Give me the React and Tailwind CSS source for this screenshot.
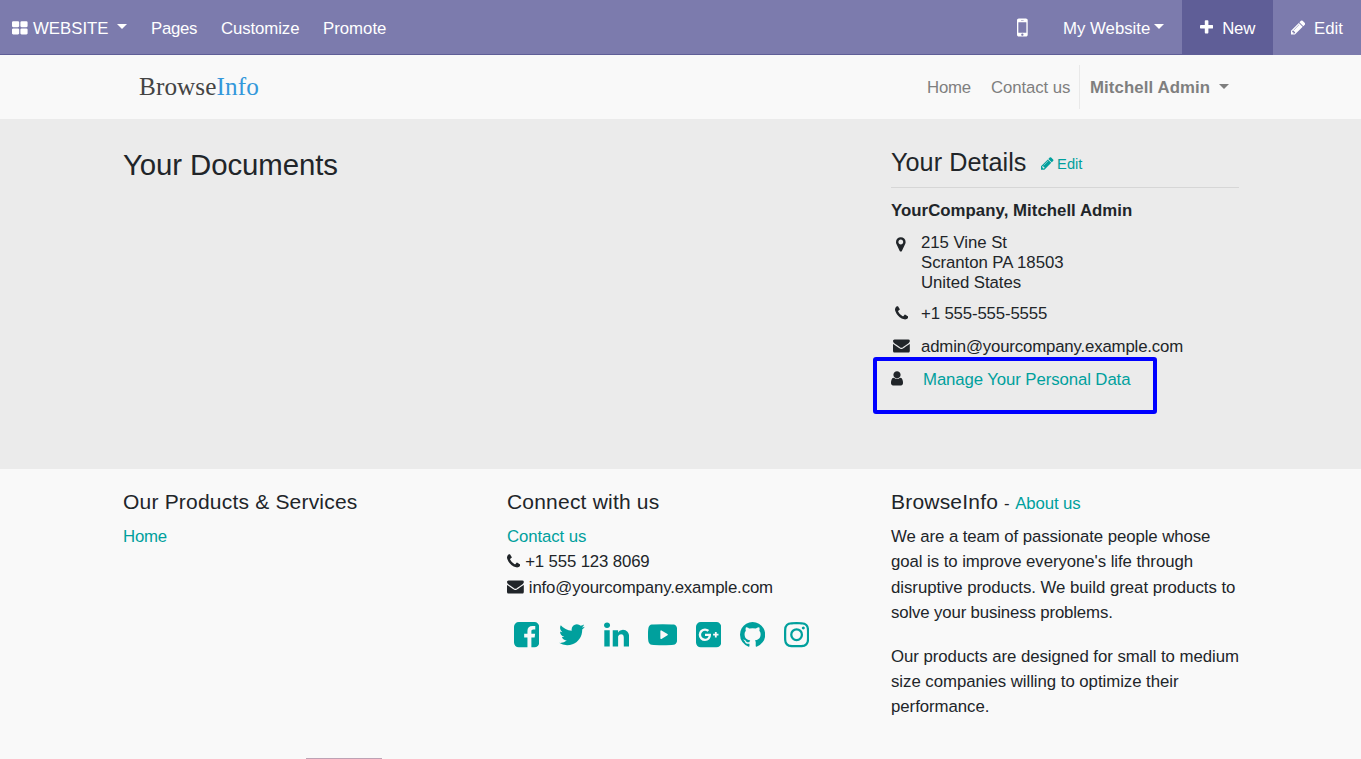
import React from "react";

const icons = {
  grid: [64, 1664, "M832 1024v384q0 52-38 90t-90 38h-512q-52 0-90-38t-38-90v-384q0-52 38-90t90-38h512q52 0 90 38t38 90zm0-768v384q0 52-38 90t-90 38h-512q-52 0-90-38t-38-90v-384q0-52 38-90t90-38h512q52 0 90 38t38 90zm896 768v384q0 52-38 90t-90 38h-512q-52 0-90-38t-38-90v-384q0-52 38-90t90-38h512q52 0 90 38t38 90zm0-768v384q0 52-38 90t-90 38h-512q-52 0-90-38t-38-90v-384q0-52 38-90t90-38h512q52 0 90 38t38 90z"],
  phone: [192, 1408, "M1600 1240q0 27-10 70.5t-21 68.5q-21 50-122 106-94 51-186 51-27 0-53-3.5t-57.5-12.5-47-14.5-55.5-20.5-49-18q-98-35-175-83-127-79-264-216t-216-264q-48-77-83-175-3-9-18-49t-20.5-55.5-14.5-47-12.5-57.5-3.5-53q0-92 51-186 56-101 106-122 25-11 68.5-21t70.5-10q14 0 21 3 18 6 53 76 11 19 30 54t35 63.5 31 53.5q3 4 17.5 25t21.5 35.5 7 28.5q0 20-28.5 50t-62 55-62 53-28.5 46q0 9 5 22.5t8.5 20.5 14 24 11.5 19q76 137 174 235t235 174q2 1 19 11.5t24 14 20.5 8.5 22.5 5q18 0 46-28.5t53-62 55-62 50-28.5q14 0 28.5 7t35.5 21.5 25 17.5q25 15 53.5 31t63.5 35 54 30q70 35 76 53 3 7 3 21z"],
  envelope: [0, 1792, "M1792 710v794q0 66-47 113t-113 47h-1472q-66 0-113-47t-47-113v-794q44 49 101 87 362 246 497 345 57 42 92.5 65.5t94.5 48 110 24.5h2q51 0 110-24.5t94.5-48 92.5-65.5q170-123 498-345 57-39 100-87zm0-294q0 79-49 151t-122 123q-376 261-468 325-10 7-42.5 31t-54 38.5-52 32.5-57.5 27-50 9h-2q-23 0-50-9t-57.5-27-52-32.5-54-38.5-42.5-31q-91-64-262-182.5t-205-142.5q-62-42-117-115.5t-55-136.5q0-78 41.5-130t118.5-52h1472q65 0 112.5 47t47.5 113z"],
  pencil: [128, 1536, "M491 1536l91-91-235-235-91 91v107h128v128h107zm523-928q0-22-22-22-10 0-17 7l-542 542q-7 7-7 17 0 22 22 22 10 0 17-7l542-542q7-7 7-17zm-54-192l416 416-832 832h-416v-416zm683 96q0 53-37 90l-166 166-416-416 166-165q36-38 90-38 53 0 91 38l235 234q37 39 37 91z"],
  plus: [192, 1408, "M1600 736v192q0 40-28 68t-68 28h-416v416q0 40-28 68t-68 28h-192q-40 0-68-28t-28-68v-416h-416q-40 0-68-28t-28-68v-192q0-40 28-68t68-28h416v-416q0-40 28-68t68-28h192q40 0 68 28t28 68v416h416q40 0 68 28t28 68z"],
  mobile: [512, 768, "M976 1408q0-33-23.5-56.5t-56.5-23.5-56.5 23.5-23.5 56.5 23.5 56.5 56.5 23.5 56.5-23.5 23.5-56.5zm208-160v-704q0-13-9.5-22.5t-22.5-9.5h-512q-13 0-22.5 9.5t-9.5 22.5v704q0 13 9.5 22.5t22.5 9.5h512q13 0 22.5-9.5t9.5-22.5zm-192-848q0-16-16-16h-160q-16 0-16 16t16 16h160q16 0 16-16zm288-16v1024q0 52-38 90t-90 38h-512q-52 0-90-38t-38-90v-1024q0-52 38-90t90-38h512q52 0 90 38t38 90z"],
  marker: [384, 1024, "M1152 640q0-106-75-181t-181-75-181 75-75 181 75 181 181 75 181-75 75-181zm256 0q0 109-33 179l-364 774q-16 33-47.5 52t-67.5 19-67.5-19-46.5-52l-365-774q-33-70-33-179 0-212 150-362t362-150 362 150 150 362z"],
  user: [256, 1280, "M1536 1399q0 109-62.5 187t-150.5 78h-854q-88 0-150.5-78t-62.5-187q0-85 8.5-160.5t31.5-152 58.5-131 94-89 134.5-34.5q131 128 313 128t313-128q76 0 134.5 34.5t94 89 58.5 131 31.5 152 8.5 160.5zm-256-887q0 159-112.5 271.5t-271.5 112.5-271.5-112.5-112.5-271.5 112.5-271.5 271.5-112.5 271.5 112.5 112.5 271.5z"],
  facebook: [128, 1536, "M1376 128q119 0 203.5 84.5t84.5 203.5v960q0 119-84.5 203.5t-203.5 84.5h-188v-595h199l30-232h-229v-148q0-56 23.5-84t91.5-28l122-1v-207q-63-9-178-9-136 0-217.5 80t-81.5 226v171h-200v232h200v595h-532q-119 0-203.5-84.5t-84.5-203.5v-960q0-119 84.5-203.5t203.5-84.5h960z"],
  twitter: [108, 1576, "M1684 408q-67 98-162 167 1 14 1 42 0 130-38 259.5t-115.5 248.5-184.5 210.5-258 146-323 54.5q-271 0-496-145 35 4 78 4 225 0 401-138-105-2-188-64.5t-114-159.5q33 5 61 5 43 0 85-11-112-23-185.5-111.5t-73.5-205.5v-4q68 38 146 41-66-44-105-115t-39-154q0-88 44-163 121 149 294.5 238.5t371.5 99.5q-8-38-8-74 0-134 94.5-228.5t228.5-94.5q140 0 236 102 109-21 205-78-37 115-142 178 93-10 186-50z"],
  linkedin: [128, 1536, "M477 625v991h-330v-991h330zm21-306q1 73-50.5 122t-135.5 49h-2q-82 0-132-49t-50-122q0-74 51.5-122.5t134.5-48.5 133 48.5 51 122.5zm1166 729v568h-329v-530q0-105-40.5-164.5t-126.5-59.5q-63 0-105.5 34.5t-63.5 85.5q-11 30-11 81v553h-329q2-399 2-647t-1-296l-1-48h329v144h-2q20-32 41-56t56.5-52 87-43.5 114.5-15.5q171 0 275 113.5t104 332.5z"],
  youtube: [0, 1792, "M1208 896q0-24-20-36l-368-224q-22-13-44-1-22 12-22 37v448q0 25 22 37 11 6 22 6 12 0 22-7l368-224q20-12 20-36zm584 0q0 96-1 150t-8.5 136.5-22.5 147.5q-16 73-69 123t-124 58q-222 25-671 25t-671-25q-71-8-124.5-58t-69.5-123q-14-65-21.5-147.5t-8.5-136.5-1-150 1-150 8.5-136.5 22.5-147.5q16-73 69-123t124-58q222-25 671-25t671 25q71 8 124.5 58t69.5 123q14 65 21.5 147.5t8.5 136.5 1 150z"],
  gplus: [128, 1536, "M1045 905q0-26-6-64h-362v132h217q-3 24-16.5 50t-37.5 53-66.5 44.5-96.5 17.5q-99 0-169-71t-70-171 70-171 169-71q92 0 153 59l104-101q-108-100-257-100-160 0-272 112.5t-112 271.5 112 271.5 272 112.5q165 0 266.5-105t101.5-270zm345 46h109v-110h-109v-110h-110v110h-110v110h110v110h110v-110zm274-535v960q0 119-84.5 203.5t-203.5 84.5h-960q-119 0-203.5-84.5t-84.5-203.5v-960q0-119 84.5-203.5t203.5-84.5h960q119 0 203.5 84.5t84.5 203.5z"],
  github: [128, 1536, "M896 128q209 0 385.5 103t279.5 279.5 103 385.5q0 251-146.5 451.5t-378.5 277.5q-27 5-40-7t-13-30q0-3 .5-76.5t.5-134.5q0-97-52-142 57-6 102.5-18t94-39 81-66.5 53-105 20.5-150.5q0-119-79-206 37-91-8-204-28-9-81 11t-92 44l-38 24q-93-26-192-26t-192 26q-16-11-42.5-27t-83.5-38.5-85-13.5q-45 113-8 204-79 87-79 206 0 85 20.5 150t52.5 105 80.5 67 94 39 102.5 18q-39 36-49 103-21 10-45 15t-57 5-65.5-21.5-55.5-62.5q-19-32-48.5-52t-49.5-24l-20-3q-21 0-29 4.5t-5 11.5 9 14 13 12l7 5q22 10 43.5 38t31.5 51l10 23q13 38 44 61.5t67 30 69.5 7 55.5-3.5l23-4q0 38 .5 88.5t.5 54.5q0 18-13 30t-40 7q-232-77-378.5-277.5t-146.5-451.5q0-209 103-385.5t279.5-279.5 385.5-103z"],
  instagram: [128, 1536, "M1152 896q0-106-75-181t-181-75-181 75-75 181 75 181 181 75 181-75 75-181zm138 0q0 164-115 279t-279 115-279-115-115-279 115-279 279-115 279 115 115 279zm108-410q0 38-27 65t-65 27-65-27-27-65 27-65 65-27 65 27 27 65zm-502-220q-7 0-76.5-.5t-105.5 0-96.5 3-103 10-71.5 18.5q-50 20-88 58t-58 88q-11 29-18.5 71.5t-10 103-3 96.5 0 105.5.5 76.5-.5 76.5 0 105.5 3 96.5 10 103 18.5 71.5q20 50 58 88t88 58q29 11 71.5 18.5t103 10 96.5 3 105.5 0 76.5-.5 76.5.5 105.5 0 96.5-3 103-10 71.5-18.5q50-20 88-58t58-88q11-29 18.5-71.5t10-103 3-96.5 0-105.5-.5-76.5.5-76.5 0-105.5-3-96.5-10-103-18.5-71.5q-20-50-58-88t-88-58q-29-11-71.5-18.5t-103-10-96.5-3-105.5 0-76.5.5zm768 630q0 229-5 317-10 208-124 322t-322 124q-88 5-317 5t-317-5q-208-10-322-124t-124-322q-5-88-5-317t5-317q10-208 124-322t322-124q88-5 317-5t317 5q208 10 322 124t124 322q5 88 5 317z"],
};

function Icon({ name, size = 16.8, className = "" }) {
  const [x, w, d] = icons[name];
  return (
    <svg className={`shrink-0 ${className}`} viewBox={`${x} 0 ${w} 1792`} width={(w / 1792) * size} height={size} fill="currentColor" aria-hidden="true">
      <path d={d} />
    </svg>
  );
}

function Caret({ className = "" }) {
  return (
    <svg className={`shrink-0 ${className}`} width="10" height="5" viewBox="0 0 10 5" fill="currentColor" aria-hidden="true">
      <path d="M0 0h10L5 5z" />
    </svg>
  );
}

function TopBar() {
  return (
    <nav className="flex h-[55px] border-b border-[#5f5e97] bg-[#7c7bad] leading-[57px] text-white">
      <div className="ml-3 flex w-[139px]">
        <Icon name="grid" className="mt-[19.7px]" />
        <span className="ml-[5.4px] w-[83.6px]">WEBSITE</span>
        <Caret className="mt-[24px]" />
      </div>
      <span className="w-[70px] tracking-[-0.3px]">Pages</span>
      <span className="w-[102px] tracking-[-0.1px]">Customize</span>
      <span>Promote</span>
      <Icon name="mobile" size={25} className="mt-[15px] ml-auto" />
      <div className="ml-[35.4px] flex w-[119px]">
        <span className="w-[91px]">My Website</span>
        <Caret className="mt-[24px]" />
      </div>
      <div className="flex h-[55px] w-[91px] bg-[#5f5e97] pl-[18px]">
        <Icon name="plus" className="mt-[19.4px]" />
        <span className="ml-[9px] tracking-[-0.2px]">New</span>
      </div>
      <div className="flex h-[55px] w-[88px] bg-[#7c7bad] pl-[18px]">
        <Icon name="pencil" className="mt-[19.2px]" />
        <span className="ml-[8.6px]">Edit</span>
      </div>
    </nav>
  );
}

function SiteHeader() {
  return (
    <header className="flex h-16 bg-[#f9f9f9] pl-[139px] leading-[66px] text-[#7f7f7f]">
      <div className="font-['Liberation_Serif',serif] text-[25.2px] leading-[63px] tracking-[0.1px] text-[#444]">
        Browse<span className="text-[#3498db]">Info</span>
      </div>
      <span className="ml-auto w-[64px] tracking-[-0.2px]">Home</span>
      <span className="w-[88px] tracking-[-0.1px]">Contact us</span>
      <div className="mt-[10px] flex h-11 w-[282px] border-l border-[#e9e9e9] pl-[10px] leading-[46px] font-bold">
        <span className="w-[129px] tracking-[0.1px]">Mitchell Admin</span>
        <Caret className="mt-[19px]" />
      </div>
    </header>
  );
}

function Documents() {
  return (
    <main className="flex h-[350px] bg-[#ebebeb] pl-[123px]">
      <h3 className="w-[768px] pt-[28px] text-[29.4px] leading-[35px] tracking-[-0.1px]">Your Documents</h3>
      <section className="relative w-[348px] pt-[27px]">
        <div className="flex h-[42px] border-b border-[#d6d6d6] leading-[32px]">
          <h4 className="w-[150px] text-[25.2px] tracking-[0.05px]">Your Details</h4>
          <a className="flex text-[14.7px] leading-[36px] text-[#00a09d]">
            <Icon name="pencil" size={14.7} className="mt-[10px]" />
            <span className="ml-[3.5px]">Edit</span>
          </a>
        </div>
        <div className="mt-[10px] leading-[25px] font-bold tracking-[0.04px]">YourCompany, Mitchell Admin</div>
        <div className="mt-[10px] flex leading-[20px]">
          <Icon name="marker" className="mt-[2.6px] ml-[5px]" />
          <address className="ml-[15.4px] tracking-[-0.05px] not-italic">
            215 Vine St<br />Scranton PA 18503<br />United States
          </address>
        </div>
        <div className="mt-[8px] flex h-[25px] leading-[25px]">
          <div className="w-[30px] pl-1"><Icon name="phone" className="mt-[3.8px]" /></div>
          <span className="tracking-[-0.14px]">+1 555-555-5555</span>
        </div>
        <div className="mt-[8px] flex h-[25px] leading-[25px]">
          <div className="w-[30px] pl-[2px]"><Icon name="envelope" className="mt-[3.3px]" /></div>
          <span className="tracking-[-0.16px]">admin@yourcompany.example.com</span>
        </div>
        <div className="mt-[8px] flex h-[25px] leading-[25px]">
          <div className="w-[32px]"><Icon name="user" className="mt-[3px]" /></div>
          <a className="tracking-[-0.1px] text-[#00a09d]">Manage Your Personal Data</a>
        </div>
        <div className="absolute top-[238px] left-[-18px] h-[57px] w-[284px] rounded-[3px] border-4 border-[#0000ff]" />
      </section>
    </main>
  );
}

const socials = [
  ["facebook", "ml-[7px]"],
  ["twitter", "ml-[19.5px]"],
  ["linkedin", "ml-[19px]"],
  ["youtube", "ml-[19px]"],
  ["gplus", "ml-[18.6px]"],
  ["github", "ml-[18.8px]"],
  ["instagram", "ml-[18.8px]"],
];

function Footer() {
  return (
    <footer className="flex h-[290px] bg-[#f9f9f9] pt-[20px] pl-[123px] leading-[25.2px]">
      <div className="flex w-[384px] flex-col">
        <h4 className="h-[35.2px] text-[21px] tracking-[0.2px]">Our Products &amp; Services</h4>
        <a className="tracking-[-0.2px] text-[#00a09d]">Home</a>
        <div className="mt-auto ml-[183px] h-px w-[76px] bg-[#bda3b5]" />
      </div>
      <div className="w-[384px]">
        <h4 className="h-[35.2px] text-[21px] tracking-[0.2px]">Connect with us</h4>
        <a className="block tracking-[-0.1px] text-[#00a09d]">Contact us</a>
        <div className="flex">
          <Icon name="phone" className="mt-[3.6px]" />
          <span className="ml-[5px] tracking-[-0.14px]">+1 555 123 8069</span>
        </div>
        <div className="flex">
          <Icon name="envelope" className="mt-[3.2px]" />
          <span className="ml-[5px] tracking-[-0.14px]">info@yourcompany.example.com</span>
        </div>
        <div className="mt-[20.2px] flex text-[#00a09d]">
          {socials.map(([name, gap]) => (
            <Icon key={name} name={name} size={29.4} className={gap} />
          ))}
        </div>
      </div>
      <div className="w-[360px]">
        <div className="flex h-[35.2px]">
          <h4 className="text-[21px] tracking-[0.2px]">BrowseInfo</h4>
          <span className="ml-[6px] leading-[29px]">- <a className="ml-[1px] tracking-[-0.15px] text-[#00a09d]">About us</a></span>
        </div>
        <p>
          <span className="tracking-[-0.08px]">We are a team of passionate people whose</span><br />
          <span className="tracking-[-0.06px]">goal is to improve everyone's life through</span><br />
          <span className="tracking-[-0.03px]">disruptive products. We build great products to</span><br />
          <span className="tracking-[-0.14px]">solve your business problems.</span>
        </p>
        <p className="mt-[18.8px] tracking-[-0.04px]">
          Our products are designed for small to medium<br />size companies willing to optimize their<br />performance.
        </p>
      </div>
    </footer>
  );
}

export default function App() {
  return (
    <div className="h-[759px] w-[1361px] overflow-hidden bg-[#f9f9f9] font-['Liberation_Sans',Arial,sans-serif] text-[16.8px] whitespace-nowrap text-[#212529]">
      <TopBar />
      <SiteHeader />
      <Documents />
      <Footer />
    </div>
  );
}
